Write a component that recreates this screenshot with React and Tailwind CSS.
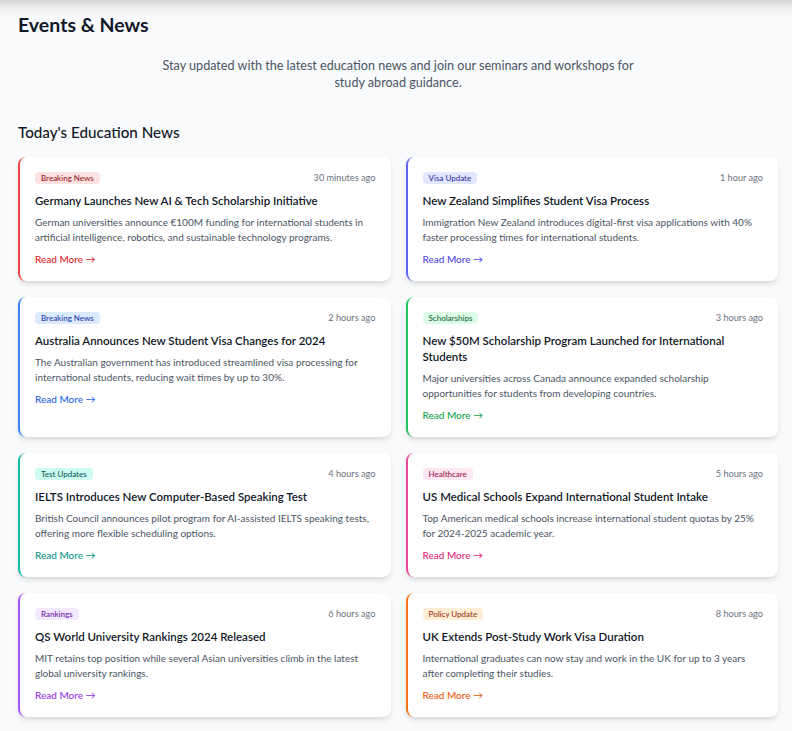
const NEWS = [
  {
    tag: 'Breaking News',
    time: '30 minutes ago',
    title: 'Germany Launches New AI & Tech Scholarship Initiative',
    text: 'German universities announce €100M funding for international students in artificial intelligence, robotics, and sustainable technology programs.',
    border: 'border-[#ef4444]',
    badge: 'bg-[#fee2e2] text-[#991b1b]',
    link: 'text-[#dc2626]',
  },
  {
    tag: 'Visa Update',
    time: '1 hour ago',
    title: 'New Zealand Simplifies Student Visa Process',
    text: 'Immigration New Zealand introduces digital-first visa applications with 40% faster processing times for international students.',
    border: 'border-[#6366f1]',
    badge: 'bg-[#e0e7ff] text-[#3730a3]',
    link: 'text-[#4f46e5]',
  },
  {
    tag: 'Breaking News',
    time: '2 hours ago',
    title: 'Australia Announces New Student Visa Changes for 2024',
    text: 'The Australian government has introduced streamlined visa processing for international students, reducing wait times by up to 30%.',
    border: 'border-[#3b82f6]',
    badge: 'bg-[#dbeafe] text-[#1e40af]',
    link: 'text-[#2563eb]',
  },
  {
    tag: 'Scholarships',
    time: '3 hours ago',
    title: 'New $50M Scholarship Program Launched for International Students',
    text: 'Major universities across Canada announce expanded scholarship opportunities for students from developing countries.',
    border: 'border-[#22c55e]',
    badge: 'bg-[#dcfce7] text-[#166534]',
    link: 'text-[#16a34a]',
  },
  {
    tag: 'Test Updates',
    time: '4 hours ago',
    title: 'IELTS Introduces New Computer-Based Speaking Test',
    text: 'British Council announces pilot program for AI-assisted IELTS speaking tests, offering more flexible scheduling options.',
    border: 'border-[#14b8a6]',
    badge: 'bg-[#ccfbf1] text-[#115e59]',
    link: 'text-[#0d9488]',
  },
  {
    tag: 'Healthcare',
    time: '5 hours ago',
    title: 'US Medical Schools Expand International Student Intake',
    text: 'Top American medical schools increase international student quotas by 25% for 2024-2025 academic year.',
    border: 'border-[#ec4899]',
    badge: 'bg-[#fce7f3] text-[#9d174d]',
    link: 'text-[#db2777]',
  },
  {
    tag: 'Rankings',
    time: '6 hours ago',
    title: 'QS World University Rankings 2024 Released',
    text: 'MIT retains top position while several Asian universities climb in the latest global university rankings.',
    border: 'border-[#a855f7]',
    badge: 'bg-[#f3e8ff] text-[#6b21a8]',
    link: 'text-[#9333ea]',
  },
  {
    tag: 'Policy Update',
    time: '8 hours ago',
    title: 'UK Extends Post-Study Work Visa Duration',
    text: 'International graduates can now stay and work in the UK for up to 3 years after completing their studies.',
    border: 'border-[#f97316]',
    badge: 'bg-[#ffedd5] text-[#9a3412]',
    link: 'text-[#ea580c]',
  },
];

function NewsCard({ item }) {
  return (
    <div className={`bg-white rounded-lg shadow-md border-l-2 ${item.border} px-[15px] py-[15px] flex flex-col`}>
      <div className="flex items-center justify-between h-[12px]">
        <span className={`${item.badge} rounded text-[8px] font-medium leading-[12px] px-[6px]`}>{item.tag}</span>
        <span className="text-[9.2px] text-[#6b7280]">{item.time}</span>
      </div>
      <h3 className="mt-[9px] text-[11.5px] font-semibold leading-[16px] text-[#111827]">{item.title}</h3>
      <p className="mt-[5.5px] text-[10px] leading-[15px] text-[#4b5563]">{item.text}</p>
      <a href="#" className={`mt-[7.5px] text-[10px] font-medium leading-[14px] ${item.link}`}>Read More →</a>
    </div>
  );
}

export default function App() {
  return (
    <div
      className="min-h-screen bg-[#f8fafc] bg-[linear-gradient(to_bottom,#d6d6d6_0px,#eeeff0_8px,#f8fafc_17px)] pt-[13px] pb-6 pl-[18px] pr-[14px]"
      style={{ fontFamily: 'Lato, "Noto Sans", sans-serif' }}
    >
      <h1 className="text-[19.5px] font-bold leading-[24px] text-[#111827]">Events &amp; News</h1>
      <p className="mt-[19.5px] mx-auto max-w-[480px] text-center text-[12.6px] leading-[17px] text-[#4b5563]">
        Stay updated with the latest education news and join our seminars and workshops for study abroad guidance.
      </p>
      <h2 className="mt-[31.5px] text-[15.2px] font-medium leading-[20px] text-[#111827]">Today's Education News</h2>
      <div className="mt-[15px] grid grid-cols-2 gap-x-[15px] gap-y-[16px]">
        {NEWS.map((item) => (
          <NewsCard key={item.title} item={item} />
        ))}
      </div>
    </div>
  );
}
